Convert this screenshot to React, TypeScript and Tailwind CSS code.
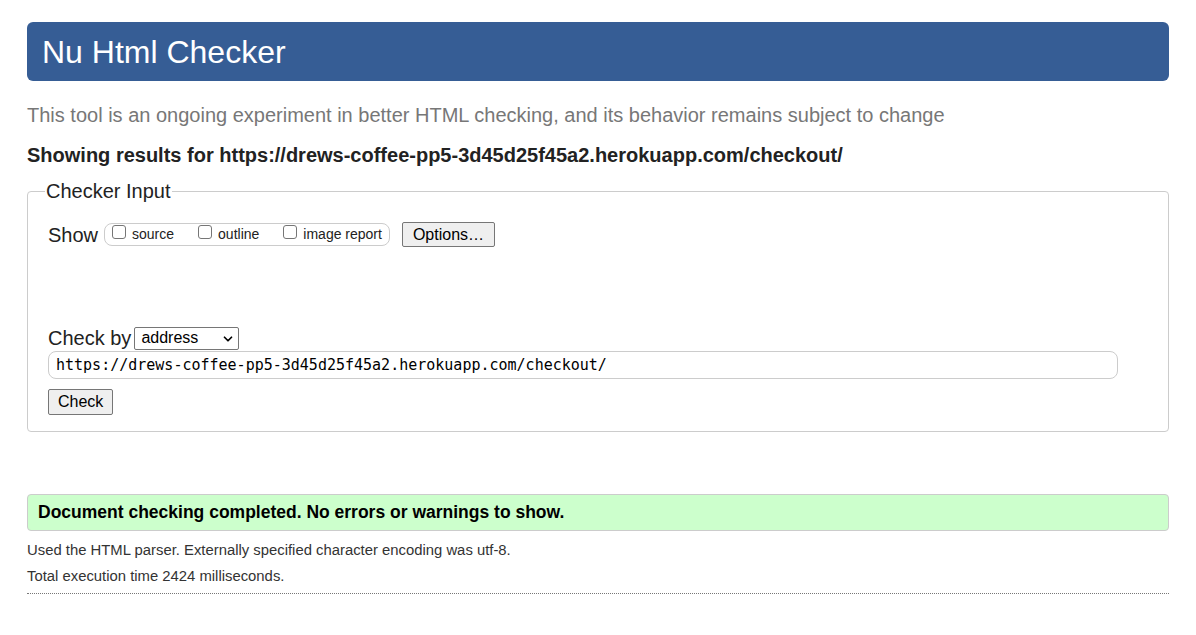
import { ChevronDown } from 'lucide-react';

const sans = { fontFamily: '"Liberation Sans", Arial, sans-serif' };

function Checkbox({ label }: { label: string }) {
  return (
    <label className="flex items-center gap-[6px] text-[14px] text-[#222]">
      <span className="mt-[-6px] block h-[14px] w-[14px] rounded-[3px] border border-[#767676] bg-white" />
      {label}
    </label>
  );
}

export default function App() {
  const url = 'https://drews-coffee-pp5-3d45d25f45a2.herokuapp.com/checkout/';

  return (
    <div className="min-h-[635px] bg-white px-[27px] pt-[22px] text-[#222]" style={sans}>
      {/* Header */}
      <div className="flex h-[59px] items-center rounded-[6px] bg-[#365d95] px-[15px]">
        <h1 className="text-[32px] leading-none text-white">Nu Html Checker</h1>
      </div>

      <p className="mt-[22px] text-[20px] leading-[24px] text-[#777]">
        This tool is an ongoing experiment in better HTML checking, and its behavior remains subject to change
      </p>
      <p className="mt-[16px] text-[20px] font-bold leading-[24px] text-[#222]">
        Showing results for {url}
      </p>

      {/* Checker input */}
      <fieldset className="mt-[12px] rounded-[4px] border border-[#ccc] px-[20px] pb-[16px]">
        <legend className="ml-[-3px] px-[1px] text-[20px] leading-[24px] text-[#222]">Checker Input</legend>

        <div className="mt-[19px] flex items-center">
          <span className="mr-[6px] text-[20px] leading-[24px]">Show</span>
          <div className="flex h-[23px] items-center gap-[24px] rounded-[8px] border border-[#ccc] pl-[7px] pr-[7px]">
            <Checkbox label="source" />
            <Checkbox label="outline" />
            <Checkbox label="image report" />
          </div>
          <button className="ml-[12px] h-[25px] rounded-[2px] border border-[#767676] bg-[#efefef] px-[10px] text-[16px] leading-none text-black">
            Options…
          </button>
        </div>

        <div className="mt-[79px] flex items-center">
          <span className="mr-[3px] text-[20px] leading-[24px]">Check by</span>
          <div className="relative flex h-[23px] w-[105px] items-center rounded-[2px] border border-[#767676] bg-white pl-[6px] text-[16px] text-black">
            address
            <ChevronDown className="absolute right-[3px] top-[4px] h-[14px] w-[14px]" strokeWidth={3} />
          </div>
        </div>

        <div
          className="mt-[1px] flex h-[28px] w-[1070px] items-center rounded-[8px] border border-[#ccc] px-[7px] text-[15px] text-black"
          style={{ fontFamily: '"DejaVu Sans Mono", "Liberation Mono", monospace' }}
        >
          {url}
        </div>

        <button className="mt-[10px] h-[26px] rounded-[2px] border border-[#767676] bg-[#efefef] px-[9px] text-[16px] leading-none text-black">
          Check
        </button>
      </fieldset>

      {/* Result */}
      <div className="mt-[62px] flex h-[37px] items-center rounded-[4px] border border-[#ccc] bg-[#ccffcc] px-[10px]">
        <span className="text-[17.5px] font-bold text-black">
          Document checking completed. No errors or warnings to show.
        </span>
      </div>

      <p className="mt-[10px] text-[14.85px] leading-[18px] text-[#333]">
        Used the HTML parser. Externally specified character encoding was utf-8.
      </p>
      <p className="mt-[8px] text-[14.85px] leading-[18px] text-[#333]">Total execution time 2424 milliseconds.</p>
      <div className="mt-[8px] border-b border-dotted border-[#777]" />
    </div>
  );
}
